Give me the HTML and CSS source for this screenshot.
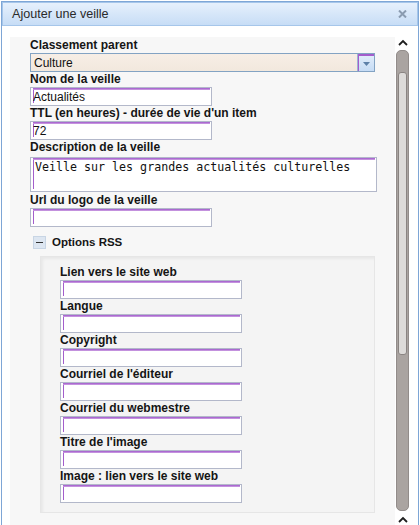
FILE: index.html
```html
<!DOCTYPE html>
<html lang="fr">
<head>
<meta charset="utf-8">
<title>Ajouter une veille</title>
<link rel="stylesheet" href="styles.css">
</head>
<body>
<div class="dialog">
  <div class="titlebar">
    <span class="title">Ajouter une veille</span>
    <svg class="close" width="9" height="8" viewBox="0 0 9 8"><path d="M1 0.5 L8 7.5 M8 0.5 L1 7.5" stroke="#8a9bb0" stroke-width="2"/></svg>
  </div>
  <div class="body">
    <div class="panel">
      <div class="field">
        <label class="lbl">Classement parent</label>
        <div class="select"><span class="select-text">Culture</span><span class="select-btn"><svg width="7" height="4" viewBox="0 0 7 4"><path d="M0 0 H7 L3.5 4 Z" fill="#5d80a8"/></svg></span></div>
      </div>
      <div class="field">
        <label class="lbl">Nom de la veille</label>
        <input class="inp" type="text" value="Actualités">
      </div>
      <div class="field">
        <label class="lbl">TTL (en heures) - durée de vie d'un item</label>
        <input class="inp" type="text" value="72">
      </div>
      <div class="field">
        <label class="lbl">Description de la veille</label>
        <textarea class="area">Veille sur les grandes actualités culturelles</textarea>
      </div>
      <div class="field">
        <label class="lbl">Url du logo de la veille</label>
        <input class="inp" type="text" value="">
      </div>
      <div class="toggle">
        <span class="minus"><span class="dash"></span></span>
        <span class="toggle-text">Options RSS</span>
      </div>
      <div class="rss">
        <div class="field"><label class="lbl">Lien vers le site web</label><input class="inp" type="text"></div>
        <div class="field"><label class="lbl">Langue</label><input class="inp" type="text"></div>
        <div class="field"><label class="lbl">Copyright</label><input class="inp" type="text"></div>
        <div class="field"><label class="lbl">Courriel de l'éditeur</label><input class="inp" type="text"></div>
        <div class="field"><label class="lbl">Courriel du webmestre</label><input class="inp" type="text"></div>
        <div class="field"><label class="lbl">Titre de l'image</label><input class="inp" type="text"></div>
        <div class="field"><label class="lbl">Image : lien vers le site web</label><input class="inp" type="text"></div>
      </div>
    </div>
    <div class="scroll">
      <svg class="caret" width="10" height="7" viewBox="0 0 10 7"><path d="M1 6 L5 2 L9 6" fill="none" stroke="#1e1e1e" stroke-width="1.8"/></svg>
      <div class="track"><div class="thumb"></div></div>
      <svg class="caret caret-bottom" width="10" height="7" viewBox="0 0 10 7"><path d="M1 6 L5 2 L9 6" fill="none" stroke="#1e1e1e" stroke-width="1.8"/></svg>
    </div>
  </div>
</div>
</body>
</html>
```
FILE: styles.css
```css
html, body {
  margin: 0;
  padding: 0;
  background: #fff;
}
body {
  font-family: "Liberation Sans", Arial, sans-serif;
  color: #1a1a1a;
}
.dialog {
  margin: 1px 0 0 1px;
  width: 418px;
  height: 524px;
  box-sizing: border-box;
  border: 1px solid #7ea6d6;
  border-bottom: none;
  background: #fff;
  overflow: hidden;
}
.titlebar {
  height: 24px;
  box-sizing: border-box;
  border: 1px solid #a6c6ea;
  background: linear-gradient(#e6f0fc, #c7ddf6);
  display: flex;
  align-items: center;
  justify-content: space-between;
  padding: 0 10px 0 9px;
}
.title {
  font-size: 12.6px;
  color: #2a2a2a;
}
.close {
  display: block;
  margin-top: 0px;
}
.body {
  display: flex;
  padding: 11px 0 0 8px;
  align-items: flex-start;
}
.panel {
  width: 385px;
  flex: none;
  background: #f7f7f7;
  padding: 1px 0 40px 20px;
  box-sizing: border-box;
}
.field {
  display: flex;
  flex-direction: column;
  align-items: flex-start;
}
.lbl {
  display: block;
  font-size: 12px;
  font-weight: bold;
  line-height: 15px;
  height: 15px;
  color: #151515;
  white-space: nowrap;
}
.inp, .area {
  display: block;
  margin: 0;
  box-sizing: border-box;
  border: 1px solid #b3b8ca;
  background:
    linear-gradient(#9f55ca, #cfa6e4) 2px 0 / calc(100% - 3px) 2px no-repeat,
    linear-gradient(#a35ecc, #a35ecc) 2px 0 / 1px calc(100% - 2px) no-repeat,
    #fff;
  outline: none;
  color: #111;
}
.inp {
  width: 182px;
  height: 19px;
  padding: 1px 0 0 2px;
  font-family: "Liberation Sans", Arial, sans-serif;
  font-size: 12px;
}
.area {
  width: 347px;
  height: 35px;
  margin: 2px 0 1px;
  padding: 2px 0 0 4px;
  resize: none;
  font-family: "DejaVu Sans Mono", monospace;
  font-size: 11.65px;
  line-height: 14px;
  overflow: hidden;
}
.select {
  width: 345px;
  height: 19px;
  box-sizing: border-box;
  border: 1px solid #83a3c3;
  background: linear-gradient(#f7eee6, #f2e8dd);
  display: flex;
  align-items: center;
  justify-content: space-between;
}
.select-text {
  font-size: 12px;
  padding-left: 3px;
  color: #111;
}
.select-btn {
  width: 17px;
  height: 17px;
  box-sizing: border-box;
  border-left: 1px solid #9cb6d2;
  background:
    linear-gradient(#a45dcc, #a45dcc) 0 0 / 100% 2px no-repeat,
    linear-gradient(#a45dcc, #a45dcc) 0 0 / 1px 100% no-repeat,
    linear-gradient(#e3eefb, #c6dcf5);
  display: flex;
  align-items: center;
  justify-content: center;
  padding-top: 2px;
}
.select-btn svg {
  display: block;
}
.toggle {
  display: flex;
  align-items: center;
  height: 14px;
  margin-top: 8px;
  padding-left: 3px;
}
.minus {
  width: 13px;
  height: 13px;
  box-sizing: border-box;
  background: #dde6f1;
  border: 1px solid #c8d5e4;
  display: flex;
  align-items: center;
  justify-content: center;
}
.dash {
  display: block;
  width: 7px;
  height: 1px;
  background: #333;
}
.toggle-text {
  margin-left: 6px;
  font-size: 11.5px;
  font-weight: bold;
  color: #151515;
}
.rss {
  margin: 7px 0 0 10px;
  width: 335px;
  box-sizing: border-box;
  background: #f4f4f4;
  border: 1px solid #e6e6e6;
  box-shadow: inset 2px 2px 3px rgba(0, 0, 0, 0.05);
  padding: 8px 0 9px 19px;
}
.scroll {
  width: 13px;
  margin-left: 1px;
  flex: none;
  display: flex;
  flex-direction: column;
  align-items: center;
  padding-top: 2px;
}
.caret {
  display: block;
}
.track {
  margin-top: 4px;
  width: 13px;
  height: 461px;
  box-sizing: border-box;
  background: #aaa4a1;
  border: 1px solid #928c8a;
  border-radius: 5px;
  padding: 21px 1px 0;
}
.thumb {
  height: 283px;
  box-sizing: border-box;
  background: #dddbd9;
  border: 1px solid #8a8482;
  border-radius: 3px;
}
.caret-bottom {
  margin-top: 5px;
}
```
